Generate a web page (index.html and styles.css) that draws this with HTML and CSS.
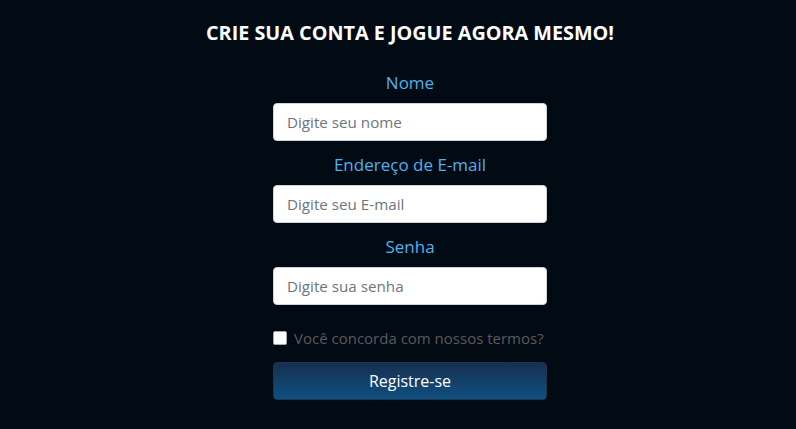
FILE: index.html
```html
<!DOCTYPE html>
<html lang="pt-BR">
<head>
<meta charset="utf-8">
<title>Registro</title>
<link rel="stylesheet" href="styles.css">
</head>
<body>
<main class="page">
  <h1 class="title">CRIE SUA CONTA E JOGUE AGORA MESMO!</h1>
  <form class="form">
    <label class="label" for="nome">Nome</label>
    <input class="field" id="nome" type="text" placeholder="Digite seu nome">
    <label class="label" for="email">Endereço de E-mail</label>
    <input class="field" id="email" type="email" placeholder="Digite seu E-mail">
    <label class="label" for="senha">Senha</label>
    <input class="field" id="senha" type="password" placeholder="Digite sua senha">
    <label class="terms"><span class="box"></span>Você concorda com nossos termos?</label>
    <button class="btn" type="button">Registre-se</button>
  </form>
</main>
</body>
</html>
```
FILE: styles.css
```css
html, body {
  margin: 0;
  height: 100%;
  background: #020a14;
}
body {
  font-family: "Open Sans", "Noto Sans", sans-serif;
}
.page {
  display: flex;
  flex-direction: column;
  align-items: center;
  padding-left: 24px;
  padding-top: 20px;
}
.title {
  margin: 0;
  color: #ffffff;
  font-size: 19.8px;
  font-weight: 700;
  line-height: 26px;
}
.form {
  display: flex;
  flex-direction: column;
  align-items: center;
  width: 274px;
  margin-top: 23px;
}
.label {
  color: #4db3ee;
  font-size: 17px;
  line-height: 24px;
  padding-top: 2px;
  margin-bottom: 8px;
}
.field {
  box-sizing: border-box;
  width: 274px;
  height: 38px;
  margin: 0 0 10px 0;
  padding: 0 13px;
  border: 1px solid #ced4da;
  border-radius: 4px;
  background: #ffffff;
  font-family: inherit;
  font-size: 15.2px;
  color: #495057;
  outline: none;
}
.field::placeholder {
  color: #6c757d;
}
.terms {
  display: flex;
  align-items: center;
  align-self: stretch;
  gap: 7px;
  color: #5a5a5a;
  font-size: 15px;
  line-height: 22px;
  margin-top: 12px;
}
.box {
  width: 12px;
  height: 12px;
  background: #ffffff;
  border: 1px solid #aaaaaa;
  border-radius: 2px;
  flex: none;
}
.btn {
  box-sizing: border-box;
  width: 274px;
  height: 38px;
  margin-top: 13px;
  border: 1px solid #1e3550;
  border-radius: 4px;
  background: linear-gradient(#17304f, #0f4f80);
  color: #ffffff;
  font-family: inherit;
  font-size: 16px;
}
```
